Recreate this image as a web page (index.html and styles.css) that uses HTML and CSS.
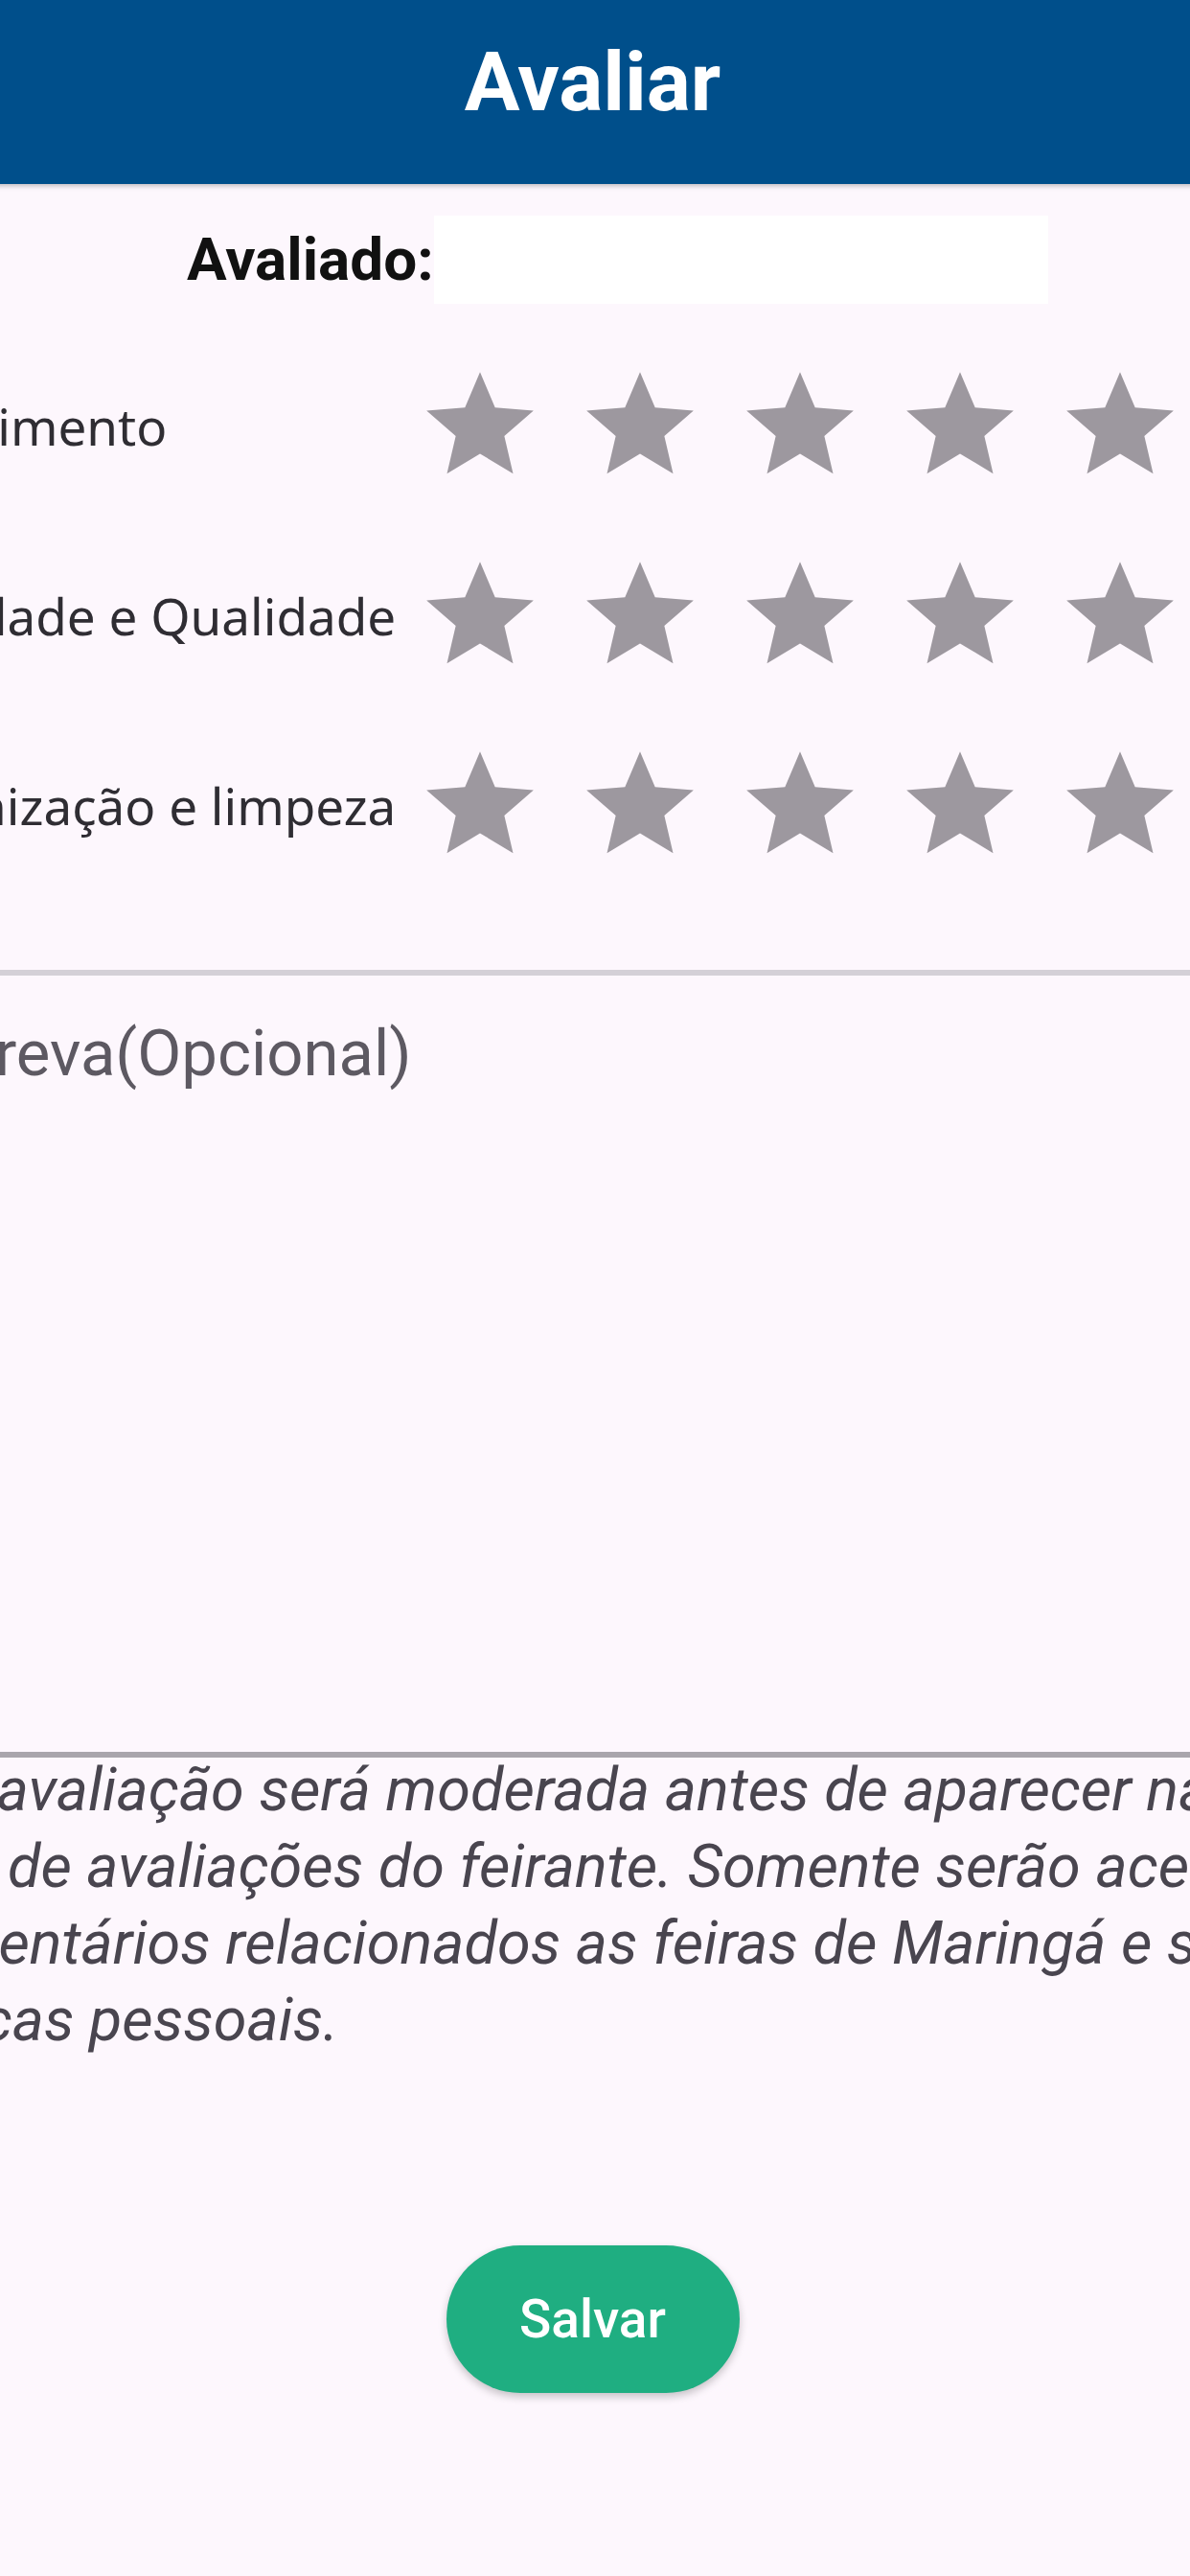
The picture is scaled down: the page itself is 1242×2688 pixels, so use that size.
FILE: index.html
```html
<!DOCTYPE html>
<html lang="pt-BR">
<head>
    <meta charset="UTF-8">
    <title>Avaliar</title>
    <link rel="stylesheet" href="styles.css">
</head>
<body>

<svg class="defs" width="0" height="0">
    <symbol id="star" viewBox="0 0 24 24">
        <path d="M12 17.27L18.18 21l-1.64-7.03L22 9.24l-7.19-.61L12 2 9.19 8.63 2 9.24l5.46 4.73L5.82 21z"/>
    </symbol>
</svg>

<div class="screen">
    <header class="app-bar">
        <h1 class="app-title">Avaliar</h1>
    </header>

    <div class="target-row">
        <span class="target-label">Avaliado:</span>
        <div class="target-box"></div>
    </div>

    <div class="ratings">
        <div class="rating-row">
            <span class="rating-label">Atendimento</span>
            <div class="stars">
                <svg class="star"><use href="#star"/></svg>
                <svg class="star"><use href="#star"/></svg>
                <svg class="star"><use href="#star"/></svg>
                <svg class="star"><use href="#star"/></svg>
                <svg class="star"><use href="#star"/></svg>
            </div>
        </div>
        <div class="rating-row">
            <span class="rating-label">Variedade e Qualidade</span>
            <div class="stars">
                <svg class="star"><use href="#star"/></svg>
                <svg class="star"><use href="#star"/></svg>
                <svg class="star"><use href="#star"/></svg>
                <svg class="star"><use href="#star"/></svg>
                <svg class="star"><use href="#star"/></svg>
            </div>
        </div>
        <div class="rating-row">
            <span class="rating-label">Organização e limpeza</span>
            <div class="stars">
                <svg class="star"><use href="#star"/></svg>
                <svg class="star"><use href="#star"/></svg>
                <svg class="star"><use href="#star"/></svg>
                <svg class="star"><use href="#star"/></svg>
                <svg class="star"><use href="#star"/></svg>
            </div>
        </div>
    </div>

    <textarea class="comment" placeholder="Escreva(Opcional)"></textarea>

    <p class="notice">Sua avaliação será moderada antes de aparecer na<br>
        lista de avaliações do feirante. Somente serão aceitos<br>
        comentários relacionados as feiras de Maringá e sem<br>
        críticas pessoais.</p>

    <div class="actions">
        <button class="save-btn" type="button">Salvar</button>
    </div>
</div>

</body>
</html>
```

FILE: styles.css
```css
html, body {
    margin: 0;
    background: #fdf7fd;
}

body {
    width: 1242px;
    height: 2688px;
    overflow: hidden;
    font-family: Roboto, "Liberation Sans", sans-serif;
}

.defs {
    position: absolute;
}

/* the phone screen is wider than the visible crop */
.screen {
    width: 1605px;
    margin-left: -184px;
}

.app-bar {
    box-sizing: border-box;
    height: 192px;
    padding-top: 43px;
    background: #004f8b;
    box-shadow: 0 2px 5px rgba(0, 0, 0, 0.25);
    text-align: center;
}

.app-title {
    margin: 0;
    color: #fff;
    font-size: 86px;
    font-weight: 700;
    line-height: 1;
}

.target-row {
    display: flex;
    align-items: center;
    margin-top: 33px;
    padding-left: 379px;
}

.target-label {
    font-size: 62px;
    font-weight: 700;
    line-height: 1;
    color: #111;
}

.target-box {
    width: 641px;
    height: 92px;
    background: #fff;
}

.ratings {
    display: flex;
    flex-direction: column;
    gap: 64px;
    margin-top: 60px;
}

.rating-row {
    display: flex;
    align-items: center;
    padding-left: 33px;
}

.rating-label {
    flex: 0 0 585px;
    font-family: "Noto Sans", "Open Sans", sans-serif;
    font-size: 53px;
    line-height: 1;
    color: #2f2d33;
    white-space: nowrap;
}

.stars {
    display: flex;
    gap: 33px;
}

.star {
    width: 134px;
    height: 134px;
    fill: #9d989f;
}

.comment {
    display: block;
    box-sizing: border-box;
    width: 100%;
    height: 822px;
    margin: 105px 0 0;
    padding: 48px 0 0 71px;
    border: none;
    border-top: 6px solid #d4d0d7;
    border-bottom: 6px solid #a9a5ac;
    background: transparent;
    resize: none;
    font-family: Roboto, "Liberation Sans", sans-serif;
    font-size: 67px;
    line-height: 1;
    color: #1d1b20;
}

.comment::placeholder {
    color: #5d5962;
}

.notice {
    margin: -6px 0 0;
    padding-left: 62px;
    font-size: 63px;
    font-style: italic;
    line-height: 80px;
    color: #49454f;
    white-space: nowrap;
}

.actions {
    display: flex;
    justify-content: center;
    margin-top: 195px;
}

.save-btn {
    width: 306px;
    height: 154px;
    border: none;
    border-radius: 77px;
    background: #1fae81;
    box-shadow: 0 4px 8px rgba(0, 0, 0, 0.22);
    color: #fff;
    font-family: Roboto, "Liberation Sans", sans-serif;
    font-size: 55px;
    font-weight: 500;
}
```
